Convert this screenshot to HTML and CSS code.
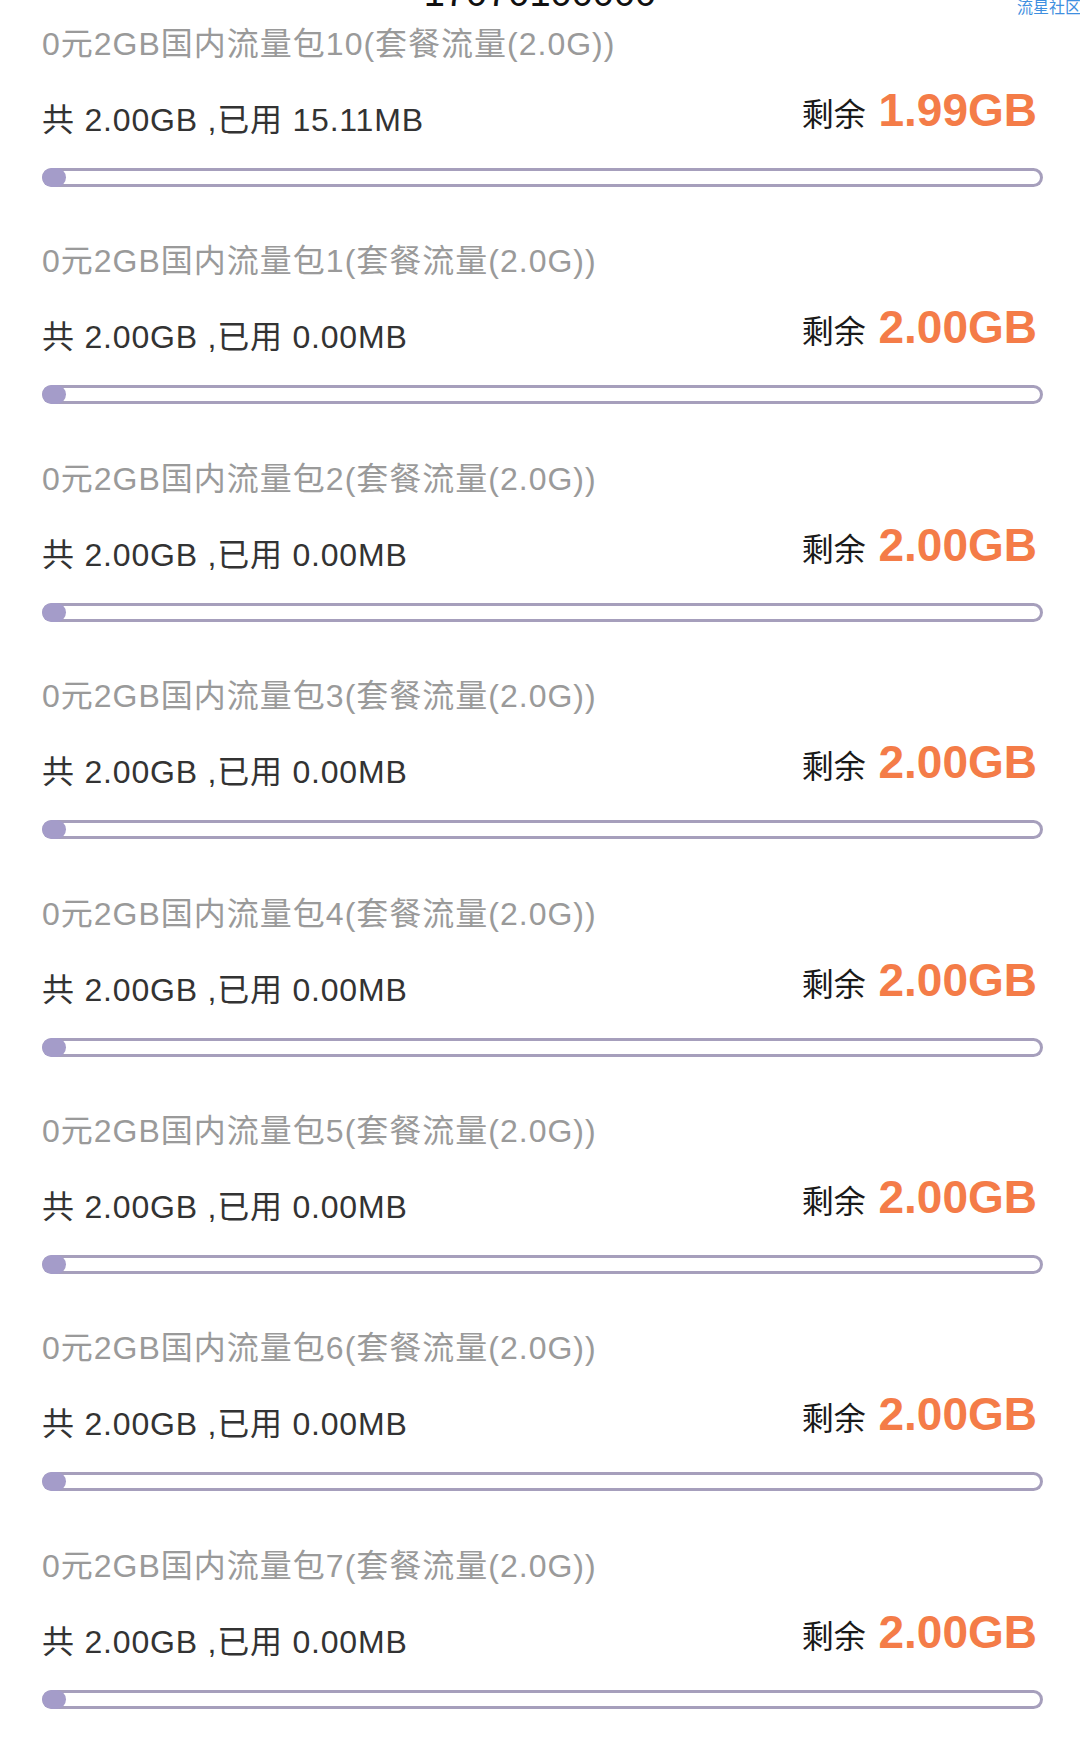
FILE: index.html
```html
<!DOCTYPE html>
<html>
    <head>
        <meta charset="utf-8">
        <title>流量包</title>
        <link rel="stylesheet" href="styles.css">
    </head>
    <body>
        <div id="watermark">流星社区</div>
        <div id="phone">17070100000</div>
        <div id="packages">
            <div class="package">
                <div class="pkg-name">0元2GB国内流量包10(套餐流量(2.0G))</div>
                <div class="pkg-row">
                    <div class="pkg-usage">共 2.00GB ,已用 15.11MB</div>
                    <div class="pkg-remain"><span class="remain-label">剩余</span> 1.99GB</div>
                </div>
                <div class="bar"><div class="bar-fill"></div></div>
            </div>
            <div class="package">
                <div class="pkg-name">0元2GB国内流量包1(套餐流量(2.0G))</div>
                <div class="pkg-row">
                    <div class="pkg-usage">共 2.00GB ,已用 0.00MB</div>
                    <div class="pkg-remain"><span class="remain-label">剩余</span> 2.00GB</div>
                </div>
                <div class="bar"><div class="bar-fill"></div></div>
            </div>
            <div class="package">
                <div class="pkg-name">0元2GB国内流量包2(套餐流量(2.0G))</div>
                <div class="pkg-row">
                    <div class="pkg-usage">共 2.00GB ,已用 0.00MB</div>
                    <div class="pkg-remain"><span class="remain-label">剩余</span> 2.00GB</div>
                </div>
                <div class="bar"><div class="bar-fill"></div></div>
            </div>
            <div class="package">
                <div class="pkg-name">0元2GB国内流量包3(套餐流量(2.0G))</div>
                <div class="pkg-row">
                    <div class="pkg-usage">共 2.00GB ,已用 0.00MB</div>
                    <div class="pkg-remain"><span class="remain-label">剩余</span> 2.00GB</div>
                </div>
                <div class="bar"><div class="bar-fill"></div></div>
            </div>
            <div class="package">
                <div class="pkg-name">0元2GB国内流量包4(套餐流量(2.0G))</div>
                <div class="pkg-row">
                    <div class="pkg-usage">共 2.00GB ,已用 0.00MB</div>
                    <div class="pkg-remain"><span class="remain-label">剩余</span> 2.00GB</div>
                </div>
                <div class="bar"><div class="bar-fill"></div></div>
            </div>
            <div class="package">
                <div class="pkg-name">0元2GB国内流量包5(套餐流量(2.0G))</div>
                <div class="pkg-row">
                    <div class="pkg-usage">共 2.00GB ,已用 0.00MB</div>
                    <div class="pkg-remain"><span class="remain-label">剩余</span> 2.00GB</div>
                </div>
                <div class="bar"><div class="bar-fill"></div></div>
            </div>
            <div class="package">
                <div class="pkg-name">0元2GB国内流量包6(套餐流量(2.0G))</div>
                <div class="pkg-row">
                    <div class="pkg-usage">共 2.00GB ,已用 0.00MB</div>
                    <div class="pkg-remain"><span class="remain-label">剩余</span> 2.00GB</div>
                </div>
                <div class="bar"><div class="bar-fill"></div></div>
            </div>
            <div class="package">
                <div class="pkg-name">0元2GB国内流量包7(套餐流量(2.0G))</div>
                <div class="pkg-row">
                    <div class="pkg-usage">共 2.00GB ,已用 0.00MB</div>
                    <div class="pkg-remain"><span class="remain-label">剩余</span> 2.00GB</div>
                </div>
                <div class="bar"><div class="bar-fill"></div></div>
            </div>
        </div>
    </body>
</html>
```

FILE: styles.css
```css
body {
    background: #ffffff;
    font-family: "Liberation Sans", "Noto Sans CJK SC", sans-serif;
    margin: 0px;
    overflow: hidden;
}
#watermark {
    position: absolute;
    top: -2px;
    right: -1px;
    font-size: 16px;
    line-height: 20px;
    color: #3f8fe0;
}
#phone {
    font-size: 38px;
    line-height: 26px;
    margin-top: -20px;
    margin-bottom: 7px;
    text-align: center;
    color: #111111;
}
#packages {
    padding: 0px 37px 0px 42px;
}
.package {
    height: 217.4px;
    box-sizing: border-box;
    padding-top: 11px;
}
.pkg-name {
    font-size: 32px;
    line-height: 40px;
    letter-spacing: 1px;
    color: #9a9a9a;
    white-space: nowrap;
}
.pkg-row {
    display: flex;
    flex-direction: row;
    justify-content: space-between;
    align-items: flex-end;
    margin-top: 21px;
    height: 55px;
}
.pkg-usage {
    font-size: 32px;
    line-height: 40px;
    letter-spacing: 0.8px;
    color: #333333;
    white-space: nowrap;
}
.pkg-remain {
    font-size: 46px;
    line-height: 50px;
    font-weight: bold;
    color: #f47c48;
    padding-bottom: 5px;
    margin-right: 6px;
    white-space: nowrap;
}
.remain-label {
    font-size: 32px;
    line-height: 32px;
    font-weight: normal;
    color: #1a1a1a;
}
.bar {
    margin-top: 28px;
    height: 19px;
    border-radius: 10px;
    box-shadow: inset 0px 0px 0px 3px #a69fbc;
    overflow: hidden;
}
.bar-fill {
    width: 24px;
    height: 100%;
    border-radius: 10px;
    background: #a49cc9;
}
```
